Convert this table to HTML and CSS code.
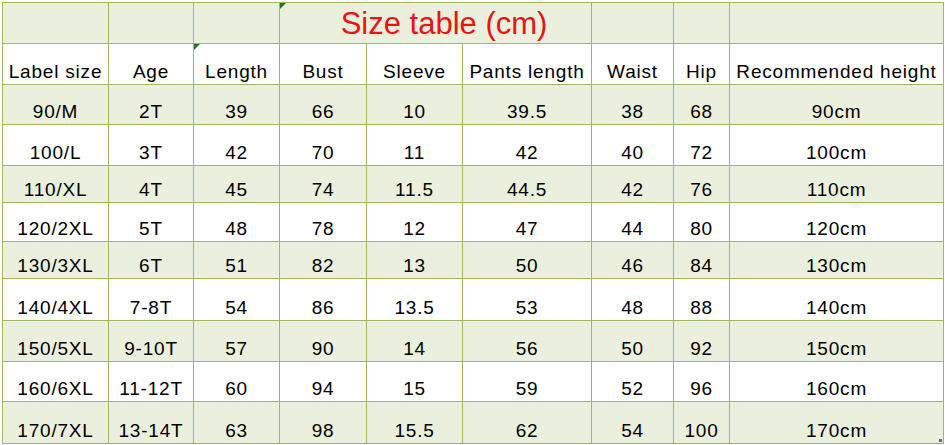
FILE: index.html
```html
<!DOCTYPE html>
<html lang="en">
<head>
<meta charset="utf-8">
<title>Size table</title>
<link rel="stylesheet" href="styles.css">
</head>
<body>
<table class="sheet">
  <colgroup>
    <col class="c1"><col class="c2"><col class="c3"><col class="c4"><col class="c5"><col class="c6"><col class="c7"><col class="c8"><col class="c9">
  </colgroup>
  <tr class="r-title shade">
    <td></td><td></td><td></td>
    <td colspan="3" class="title mark">Size table (cm)</td>
    <td></td><td></td><td></td>
  </tr>
  <tr class="r-head">
    <td>Label size</td><td>Age</td><td class="mark">Length</td><td>Bust</td><td>Sleeve</td><td>Pants length</td><td>Waist</td><td>Hip</td><td>Recommended height</td>
  </tr>
  <tr class="r1 shade"><td>90/M</td><td>2T</td><td>39</td><td>66</td><td>10</td><td>39.5</td><td>38</td><td>68</td><td>90cm</td></tr>
  <tr class="r2"><td>100/L</td><td>3T</td><td>42</td><td>70</td><td>11</td><td>42</td><td>40</td><td>72</td><td>100cm</td></tr>
  <tr class="r3 shade"><td>110/XL</td><td>4T</td><td>45</td><td>74</td><td>11.5</td><td>44.5</td><td>42</td><td>76</td><td>110cm</td></tr>
  <tr class="r4"><td>120/2XL</td><td>5T</td><td>48</td><td>78</td><td>12</td><td>47</td><td>44</td><td>80</td><td>120cm</td></tr>
  <tr class="r5 shade"><td>130/3XL</td><td>6T</td><td>51</td><td>82</td><td>13</td><td>50</td><td>46</td><td>84</td><td>130cm</td></tr>
  <tr class="r6"><td>140/4XL</td><td>7-8T</td><td>54</td><td>86</td><td>13.5</td><td>53</td><td>48</td><td>88</td><td>140cm</td></tr>
  <tr class="r7 shade"><td>150/5XL</td><td>9-10T</td><td>57</td><td>90</td><td>14</td><td>56</td><td>50</td><td>92</td><td>150cm</td></tr>
  <tr class="r8"><td>160/6XL</td><td>11-12T</td><td>60</td><td>94</td><td>15</td><td>59</td><td>52</td><td>96</td><td>160cm</td></tr>
  <tr class="r9 shade"><td>170/7XL</td><td>13-14T</td><td>63</td><td>98</td><td>15.5</td><td>62</td><td>54</td><td>100</td><td class="handle">170cm</td></tr>
</table>
</body>
</html>
```
FILE: styles.css
```css
html, body {
  margin: 0;
  padding: 0;
  background: #ffffff;
}

body {
  font-family: "Liberation Sans", Arial, sans-serif;
  color: #000000;
  overflow: hidden;
}

.sheet {
  margin: 2px 0 0 2px;
  border-collapse: collapse;
  table-layout: fixed;
  width: 941px;
}

.c1 { width: 106px; }
.c2 { width: 85px; }
.c3 { width: 86px; }
.c4 { width: 87px; }
.c5 { width: 96px; }
.c6 { width: 129px; }
.c7 { width: 82px; }
.c8 { width: 56px; }
.c9 { width: 214px; }

.sheet td {
  border: 1px solid #9fb75e;
  padding: 0 0 2px 0;
  text-align: center;
  vertical-align: bottom;
  font-size: 19px;
  line-height: 20px;
  letter-spacing: 0.8px;
  white-space: nowrap;
  overflow: hidden;
  position: relative;
}

.shade td { background: #ebf0de; }

.r-title { height: 41px; }
.r-head  { height: 41px; }
.r1 { height: 40px; }
.r2 { height: 41px; }
.r3 { height: 37px; }
.r4 { height: 39px; }
.r5 { height: 37px; }
.r6 { height: 42px; }
.r7 { height: 41px; }
.r8 { height: 40px; }
.r9 { height: 42px; }

.sheet td.title {
  color: #ee1111;
  font-size: 31px;
  line-height: 32px;
  letter-spacing: 0;
  padding: 0 0 3px 17px;
}

/* Excel error indicator triangle */
.mark::before {
  content: "";
  position: absolute;
  left: 0;
  top: 0;
  width: 0;
  height: 0;
  border-top: 6px solid #1e7a1e;
  border-right: 6px solid transparent;
}

/* selection resize handle */
.handle::after {
  content: "";
  position: absolute;
  right: 1px;
  bottom: 1px;
  width: 3px;
  height: 3px;
  background: #5a6fa0;
}
```
